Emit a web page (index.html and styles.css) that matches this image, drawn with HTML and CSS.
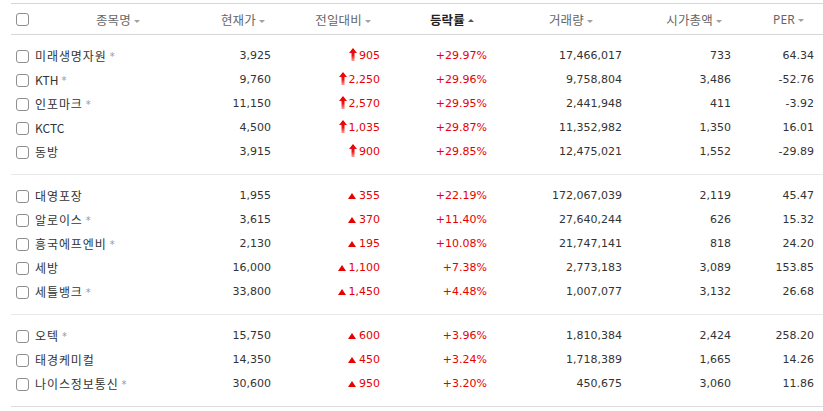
FILE: index.html
```html
<!DOCTYPE html>
<html lang="ko">
<head>
<meta charset="utf-8">
<title>상승률 상위</title>
<link rel="stylesheet" href="styles.css">
</head>
<body>
<svg width="0" height="0" class="defs">
  <defs>
    <linearGradient id="lg" x1="0" y1="0" x2="0" y2="1">
      <stop offset="0" stop-color="#e60000"/>
      <stop offset="0.55" stop-color="#f01010"/>
      <stop offset="1" stop-color="#ff9a9a"/>
    </linearGradient>
  </defs>
</svg>
<div class="board">
  <div class="row head">
    <div class="c-name"><span class="chk"></span><span class="hname">종목명<i class="sort down"></i></span></div>
    <div class="h h-price">현재가<i class="sort down"></i></div>
    <div class="h h-change">전일대비<i class="sort down"></i></div>
    <div class="h h-rate on">등락률<i class="sort upw"></i></div>
    <div class="h h-vol">거래량<i class="sort down"></i></div>
    <div class="h h-cap">시가총액<i class="sort down"></i></div>
    <div class="h h-per">PER<i class="sort down"></i></div>
  </div>

  <div class="group">
    <div class="row item">
      <div class="c-name"><span class="chk"></span><span class="nm">미래생명자원</span><span class="star">*</span></div>
      <div class="v">3,925</div>
      <div class="v red"><svg class="lim" viewBox="0 0 8 13"><polygon points="4,0 8,5 5.5,5 5.5,13 2.5,13 2.5,5 0,5" fill="url(#lg)"/></svg>905</div>
      <div class="v red">+29.97%</div>
      <div class="v">17,466,017</div>
      <div class="v">733</div>
      <div class="v last">64.34</div>
    </div>
    <div class="row item">
      <div class="c-name"><span class="chk"></span><span class="nm lat">KTH</span><span class="star">*</span></div>
      <div class="v">9,760</div>
      <div class="v red"><svg class="lim" viewBox="0 0 8 13"><polygon points="4,0 8,5 5.5,5 5.5,13 2.5,13 2.5,5 0,5" fill="url(#lg)"/></svg>2,250</div>
      <div class="v red">+29.96%</div>
      <div class="v">9,758,804</div>
      <div class="v">3,486</div>
      <div class="v last">-52.76</div>
    </div>
    <div class="row item">
      <div class="c-name"><span class="chk"></span><span class="nm">인포마크</span><span class="star">*</span></div>
      <div class="v">11,150</div>
      <div class="v red"><svg class="lim" viewBox="0 0 8 13"><polygon points="4,0 8,5 5.5,5 5.5,13 2.5,13 2.5,5 0,5" fill="url(#lg)"/></svg>2,570</div>
      <div class="v red">+29.95%</div>
      <div class="v">2,441,948</div>
      <div class="v">411</div>
      <div class="v last">-3.92</div>
    </div>
    <div class="row item">
      <div class="c-name"><span class="chk"></span><span class="nm lat">KCTC</span></div>
      <div class="v">4,500</div>
      <div class="v red"><svg class="lim" viewBox="0 0 8 13"><polygon points="4,0 8,5 5.5,5 5.5,13 2.5,13 2.5,5 0,5" fill="url(#lg)"/></svg>1,035</div>
      <div class="v red">+29.87%</div>
      <div class="v">11,352,982</div>
      <div class="v">1,350</div>
      <div class="v last">16.01</div>
    </div>
    <div class="row item">
      <div class="c-name"><span class="chk"></span><span class="nm">동방</span></div>
      <div class="v">3,915</div>
      <div class="v red"><svg class="lim" viewBox="0 0 8 13"><polygon points="4,0 8,5 5.5,5 5.5,13 2.5,13 2.5,5 0,5" fill="url(#lg)"/></svg>900</div>
      <div class="v red">+29.85%</div>
      <div class="v">12,475,021</div>
      <div class="v">1,552</div>
      <div class="v last">-29.89</div>
    </div>
  </div>

  <div class="group">
    <div class="row item">
      <div class="c-name"><span class="chk"></span><span class="nm">대영포장</span></div>
      <div class="v">1,955</div>
      <div class="v red"><svg class="tri" viewBox="0 0 8 6"><polygon points="4,0 8,6 0,6" fill="#e60000"/></svg>355</div>
      <div class="v red">+22.19%</div>
      <div class="v">172,067,039</div>
      <div class="v">2,119</div>
      <div class="v last">45.47</div>
    </div>
    <div class="row item">
      <div class="c-name"><span class="chk"></span><span class="nm">알로이스</span><span class="star">*</span></div>
      <div class="v">3,615</div>
      <div class="v red"><svg class="tri" viewBox="0 0 8 6"><polygon points="4,0 8,6 0,6" fill="#e60000"/></svg>370</div>
      <div class="v red">+11.40%</div>
      <div class="v">27,640,244</div>
      <div class="v">626</div>
      <div class="v last">15.32</div>
    </div>
    <div class="row item">
      <div class="c-name"><span class="chk"></span><span class="nm">흥국에프엔비</span><span class="star">*</span></div>
      <div class="v">2,130</div>
      <div class="v red"><svg class="tri" viewBox="0 0 8 6"><polygon points="4,0 8,6 0,6" fill="#e60000"/></svg>195</div>
      <div class="v red">+10.08%</div>
      <div class="v">21,747,141</div>
      <div class="v">818</div>
      <div class="v last">24.20</div>
    </div>
    <div class="row item">
      <div class="c-name"><span class="chk"></span><span class="nm">세방</span></div>
      <div class="v">16,000</div>
      <div class="v red"><svg class="tri" viewBox="0 0 8 6"><polygon points="4,0 8,6 0,6" fill="#e60000"/></svg>1,100</div>
      <div class="v red">+7.38%</div>
      <div class="v">2,773,183</div>
      <div class="v">3,089</div>
      <div class="v last">153.85</div>
    </div>
    <div class="row item">
      <div class="c-name"><span class="chk"></span><span class="nm">세틀뱅크</span><span class="star">*</span></div>
      <div class="v">33,800</div>
      <div class="v red"><svg class="tri" viewBox="0 0 8 6"><polygon points="4,0 8,6 0,6" fill="#e60000"/></svg>1,450</div>
      <div class="v red">+4.48%</div>
      <div class="v">1,007,077</div>
      <div class="v">3,132</div>
      <div class="v last">26.68</div>
    </div>
  </div>

  <div class="group">
    <div class="row item">
      <div class="c-name"><span class="chk"></span><span class="nm">오텍</span><span class="star">*</span></div>
      <div class="v">15,750</div>
      <div class="v red"><svg class="tri" viewBox="0 0 8 6"><polygon points="4,0 8,6 0,6" fill="#e60000"/></svg>600</div>
      <div class="v red">+3.96%</div>
      <div class="v">1,810,384</div>
      <div class="v">2,424</div>
      <div class="v last">258.20</div>
    </div>
    <div class="row item">
      <div class="c-name"><span class="chk"></span><span class="nm">태경케미컬</span></div>
      <div class="v">14,350</div>
      <div class="v red"><svg class="tri" viewBox="0 0 8 6"><polygon points="4,0 8,6 0,6" fill="#e60000"/></svg>450</div>
      <div class="v red">+3.24%</div>
      <div class="v">1,718,389</div>
      <div class="v">1,665</div>
      <div class="v last">14.26</div>
    </div>
    <div class="row item">
      <div class="c-name"><span class="chk"></span><span class="nm">나이스정보통신</span><span class="star">*</span></div>
      <div class="v">30,600</div>
      <div class="v red"><svg class="tri" viewBox="0 0 8 6"><polygon points="4,0 8,6 0,6" fill="#e60000"/></svg>950</div>
      <div class="v red">+3.20%</div>
      <div class="v">450,675</div>
      <div class="v">3,060</div>
      <div class="v last">11.86</div>
    </div>
  </div>
</div>
</body>
</html>
```

FILE: styles.css
```css
html, body {
  margin: 0;
  padding: 0;
  background: #fff;
}

.defs {
  position: absolute;
  width: 0;
  height: 0;
}

.board {
  margin: 3px 0 0 11px;
  font-family: "Noto Sans CJK KR", "Noto Sans", sans-serif;
  color: #333;
}

.row {
  display: grid;
  grid-template-columns: 179px 91px 109px 107px 135px 109px 1fr;
  align-items: center;
}

.head {
  height: 30px;
  border-top: 1px solid #d6d6d6;
  border-bottom: 1px solid #d6d6d6;
  font-size: 12.5px;
  color: #666;
}

.c-name {
  display: flex;
  align-items: center;
  padding-left: 5px;
}

.chk {
  display: inline-block;
  width: 11px;
  height: 11px;
  border: 1px solid #8e8e8e;
  border-radius: 3px;
  background: #fff;
  flex: none;
}

.head .chk {
  margin-top: 1px;
}

.hname {
  margin-left: 67px;
  letter-spacing: 0.1px;
}

.h {
  text-align: right;
  white-space: nowrap;
  letter-spacing: 0.2px;
}

.h-price { padding-right: 16px; }
.h-change { padding-right: 19px; }
.h-rate { padding-right: 23px; }
.h-vol { padding-right: 39px; }
.h-cap { padding-right: 19px; }
.h-per { padding-right: 19px; font-family: "Noto Sans", sans-serif; font-size: 12px; }

.h.on {
  font-weight: bold;
  color: #222;
}

.sort {
  display: inline-block;
  width: 0;
  height: 0;
  margin-left: 3px;
  vertical-align: middle;
  border-left: 3px solid transparent;
  border-right: 3px solid transparent;
}

.sort.down {
  border-top: 3px solid #a0a0a0;
}

.sort.upw {
  border-bottom: 3px solid #555;
  margin-top: -2px;
}

.group {
  padding: 9px 0 10px;
  border-bottom: 1px solid #e8e8e8;
}

.group:last-child {
  border-bottom-color: #dcdcdc;
}

.item {
  height: 24px;
}

.item .c-name {
  font-size: 12px;
  line-height: 24px;
}

.nm {
  margin-left: 6px;
  color: #333;
  white-space: nowrap;
  letter-spacing: 0.9px;
}

.nm.lat {
  letter-spacing: 0;
}

.star {
  margin-left: 3px;
  color: #999;
  font-family: "DejaVu Sans", sans-serif;
  font-size: 10px;
  line-height: 24px;
  position: relative;
  top: 1px;
}

.v {
  text-align: right;
  padding-right: 10px;
  font-family: "DejaVu Sans", sans-serif;
  font-size: 11px;
  line-height: 24px;
  color: #333;
  white-space: nowrap;
}

.v.last {
  padding-right: 9px;
}

.v.red {
  color: #e80000;
}

.lim {
  width: 8px;
  height: 13px;
  margin-right: 2px;
  vertical-align: -2px;
}

.tri {
  width: 8px;
  height: 6px;
  margin-right: 3px;
  vertical-align: 0;
}
```
